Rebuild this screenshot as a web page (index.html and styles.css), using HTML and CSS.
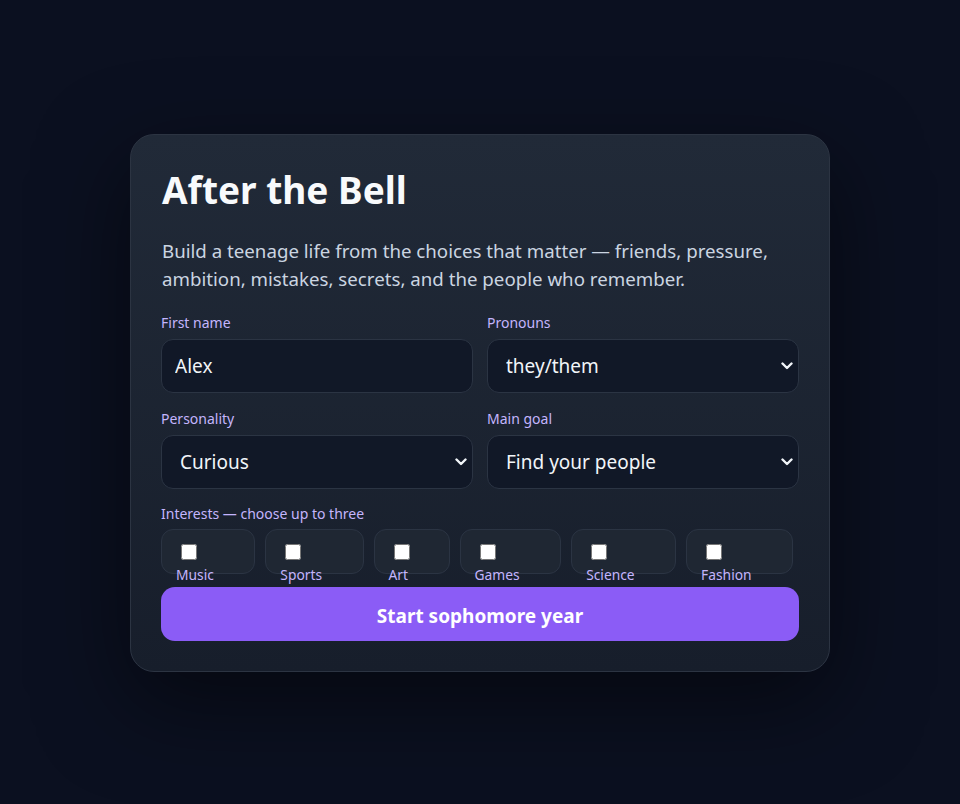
FILE: index.html
```html
<!DOCTYPE html>
<html lang="en">
<head>
    <meta charset="UTF-8">
    <meta name="viewport" content="width=device-width, initial-scale=1.0">
    <title>After the Bell</title>
    <link rel="stylesheet" href="styles.css">
</head>
<body>
    <div class="card">
        <!-- Intro -->
        <h1>After the Bell</h1>
        <p class="lead">Build a teenage life from the choices that matter — friends, pressure, ambition, mistakes, secrets, and the people who remember.</p>

        <!-- Character form -->
        <form class="setup">
            <div class="grid">
                <div class="field">
                    <label for="firstName">First name</label>
                    <input type="text" id="firstName" value="Alex">
                </div>
                <div class="field">
                    <label for="pronouns">Pronouns</label>
                    <select id="pronouns">
                        <option>they/them</option>
                        <option>she/her</option>
                        <option>he/him</option>
                    </select>
                </div>
                <div class="field">
                    <label for="personality">Personality</label>
                    <select id="personality">
                        <option>Curious</option>
                        <option>Bold</option>
                        <option>Shy</option>
                    </select>
                </div>
                <div class="field">
                    <label for="goal">Main goal</label>
                    <select id="goal">
                        <option>Find your people</option>
                        <option>Top of the class</option>
                        <option>Make the team</option>
                    </select>
                </div>
            </div>

            <div class="field">
                <span class="label">Interests — choose up to three</span>
                <div class="interests">
                    <label class="chip"><input type="checkbox"><span>Music</span></label>
                    <label class="chip"><input type="checkbox"><span>Sports</span></label>
                    <label class="chip"><input type="checkbox"><span>Art</span></label>
                    <label class="chip"><input type="checkbox"><span>Games</span></label>
                    <label class="chip"><input type="checkbox"><span>Science</span></label>
                    <label class="chip"><input type="checkbox"><span>Fashion</span></label>
                </div>
            </div>

            <button type="button" class="start">Start sophomore year</button>
        </form>
    </div>
</body>
</html>
```

FILE: styles.css
```css
* {
    margin: 0;
    padding: 0;
    box-sizing: border-box;
}

body {
    font-family: 'Noto Sans', 'Open Sans', sans-serif;
    background: #0b1020;
    color: #e5e7eb;
    min-height: 100vh;
    padding-top: 2px;
    display: flex;
    align-items: center;
    justify-content: center;
}

.card {
    width: 700px;
    padding: 32px 30px 30px;
    border: 1px solid #2c3442;
    border-radius: 24px;
    background: linear-gradient(180deg, #212a38 0%, #171e2b 100%);
    box-shadow: 0 30px 90px rgba(0, 0, 0, 0.5);
}

h1 {
    font-size: 37px;
    font-weight: 700;
    line-height: 44px;
    color: #f8fafc;
    margin: 1px 0 25px 1px;
}

.lead {
    font-size: 18.7px;
    line-height: 28px;
    color: #cbd5e1;
    margin: 0 0 20px 1px;
}

/* Form */
.grid {
    display: grid;
    grid-template-columns: 1fr 1fr;
    gap: 16px 14px;
    margin-bottom: 15px;
}

.field label,
.field .label {
    display: block;
    font-size: 14px;
    line-height: 20px;
    color: #c4b5fd;
    margin-bottom: 6px;
}

.field input[type="text"],
.field select {
    width: 100%;
    height: 54px;
    padding: 0 13px;
    font-family: inherit;
    font-size: 19px;
    color: #f1f5f9;
    background-color: #111827;
    border: 1px solid #2b3443;
    border-radius: 12px;
    outline: none;
}

.field select {
    -webkit-appearance: none;
    appearance: none;
    padding-left: 18px;
    background-image: url("data:image/svg+xml,%3Csvg xmlns='http://www.w3.org/2000/svg' width='12' height='8' viewBox='0 0 12 8'%3E%3Cpath d='M1.5 1.5 6 6 10.5 1.5' fill='none' stroke='%23f1f5f9' stroke-width='2.4' stroke-linecap='round' stroke-linejoin='round'/%3E%3C/svg%3E");
    background-repeat: no-repeat;
    background-position: right 5px center;
    background-size: 12px 8px;
}

/* Interests */
.interests {
    display: flex;
    flex-wrap: wrap;
    gap: 10px;
    margin-top: -1px;
}

.field .chip {
    display: flex;
    flex-wrap: wrap;
    align-content: flex-start;
    row-gap: 5px;
    column-gap: 5.5px;
    height: 45px;
    padding: 14px 14px 0;
    margin: 0;
    border: 1px solid #2b3443;
    border-radius: 12px;
    background: #1f2733;
    font-size: 13.8px;
    line-height: 20px;
    color: #c4b5fd;
    cursor: pointer;
}

.chip input {
    width: 16px;
    height: 16px;
    margin: 0 0 0 5px;
}

.chip span {
    flex-basis: 100%;
}

.start {
    display: block;
    width: 100%;
    height: 54px;
    margin-top: 13px;
    padding-top: 3px;
    font-family: inherit;
    font-size: 19px;
    font-weight: 700;
    color: #fff;
    background: #8b5cf6;
    border: none;
    border-radius: 14px;
    cursor: pointer;
}
```
